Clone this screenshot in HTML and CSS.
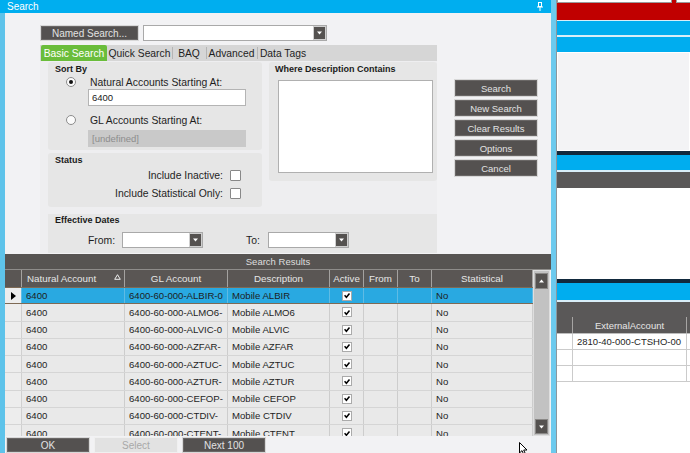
FILE: index.html
```html
<!DOCTYPE html>
<html>
<head>
<meta charset="utf-8">
<title>Search</title>
<link rel="stylesheet" href="styles.css">
</head>
<body>
<div class="screen">
  <div class="window">
    <div class="titlebar">
      <span>Search</span>
      <svg class="pin" viewBox="0 0 6 9" width="6" height="9"><rect x="1.5" y="0.5" width="3" height="4" fill="none" stroke="#fff" stroke-width="1"/><line x1="0" y1="5" x2="6" y2="5" stroke="#fff" stroke-width="1"/><line x1="3" y1="5" x2="3" y2="9" stroke="#fff" stroke-width="1"/></svg>
    </div>
    <div class="wbody">
      <div class="top">
        <div class="form">
          <div class="named-row">
            <div class="btn named">Named Search...</div>
            <div class="combo named-combo"><span class="combo-btn"><svg viewBox="0 0 7 4" width="7" height="4"><path d="M1 0.5h5l-2.5 3z" fill="#fff"/></svg></span></div>
          </div>
          <div class="tabs">
            <span class="tab active t1">Basic Search</span>
            <span class="tab t2">Quick Search</span>
            <span class="tab t3">BAQ</span>
            <span class="tab t4">Advanced</span>
            <span class="tab t5">Data Tags</span>
          </div>
          <div class="panel">
            <div class="left-col">
              <div class="group sortby">
                <div class="glabel">Sort By</div>
                <div class="radio-row"><span class="radio on"></span><span>Natural Accounts Starting At:</span></div>
                <div class="input">6400</div>
                <div class="radio-row second"><span class="radio"></span><span>GL Accounts Starting At:</span></div>
                <div class="input disabled">[undefined]</div>
              </div>
              <div class="group status">
                <div class="glabel">Status</div>
                <div class="check-row"><span>Include Inactive:</span><span class="cb"></span></div>
                <div class="check-row"><span>Include Statistical Only:</span><span class="cb"></span></div>
              </div>
            </div>
            <div class="group where">
              <div class="glabel">Where Description Contains</div>
              <div class="textarea"></div>
            </div>
            <div class="dates">
              <div class="glabel">Effective Dates</div>
              <div class="date-row">
                <span class="dlabel from">From:</span>
                <div class="combo date"><span class="combo-btn"><svg viewBox="0 0 7 4" width="7" height="4"><path d="M1 0.5h5l-2.5 3z" fill="#fff"/></svg></span></div>
                <span class="dlabel to">To:</span>
                <div class="combo date"><span class="combo-btn"><svg viewBox="0 0 7 4" width="7" height="4"><path d="M1 0.5h5l-2.5 3z" fill="#fff"/></svg></span></div>
              </div>
            </div>
          </div>
        </div>
        <div class="actions">
          <div class="btn act">Search</div>
          <div class="btn act">New Search</div>
          <div class="btn act">Clear Results</div>
          <div class="btn act">Options</div>
          <div class="btn act">Cancel</div>
        </div>
      </div>
      <div class="results">
        <div class="results-title">Search Results</div>
        <div class="grid-wrap">
          <div class="grid">
            <div class="row head">
              <div class="c sel"></div>
              <div class="c first-col">Natural Account<svg class="sort" viewBox="0 0 7 6" width="7" height="6"><path d="M3.5 0.7 L6.3 5.3 H0.7 Z" fill="none" stroke="#eee" stroke-width="1"/></svg></div>
              <div class="c">GL Account</div>
              <div class="c">Description</div>
              <div class="c">Active</div>
              <div class="c">From</div>
              <div class="c">To</div>
              <div class="c">Statistical</div>
            </div>
            <div class="rows">
              <div class="row selected"><div class="c sel"><svg viewBox="0 0 5 8" width="5" height="8"><path d="M0 0 L5 4 L0 8 Z" fill="#000"/></svg></div><div class="c">6400</div><div class="c">6400-60-000-ALBIR-0</div><div class="c">Mobile ALBIR</div><div class="c chk"><span class="tick"><svg viewBox="0 0 9 9" width="9" height="9"><path d="M1.8 4.3 L3.8 6.5 L7.3 2.3" fill="none" stroke="#000" stroke-width="1.7"/></svg></span></div><div class="c"></div><div class="c"></div><div class="c">No</div></div>
              <div class="row"><div class="c sel"></div><div class="c">6400</div><div class="c">6400-60-000-ALMO6-</div><div class="c">Mobile ALMO6</div><div class="c chk"><span class="tick"><svg viewBox="0 0 9 9" width="9" height="9"><path d="M1.8 4.3 L3.8 6.5 L7.3 2.3" fill="none" stroke="#000" stroke-width="1.7"/></svg></span></div><div class="c"></div><div class="c"></div><div class="c">No</div></div>
              <div class="row"><div class="c sel"></div><div class="c">6400</div><div class="c">6400-60-000-ALVIC-0</div><div class="c">Mobile ALVIC</div><div class="c chk"><span class="tick"><svg viewBox="0 0 9 9" width="9" height="9"><path d="M1.8 4.3 L3.8 6.5 L7.3 2.3" fill="none" stroke="#000" stroke-width="1.7"/></svg></span></div><div class="c"></div><div class="c"></div><div class="c">No</div></div>
              <div class="row"><div class="c sel"></div><div class="c">6400</div><div class="c">6400-60-000-AZFAR-</div><div class="c">Mobile AZFAR</div><div class="c chk"><span class="tick"><svg viewBox="0 0 9 9" width="9" height="9"><path d="M1.8 4.3 L3.8 6.5 L7.3 2.3" fill="none" stroke="#000" stroke-width="1.7"/></svg></span></div><div class="c"></div><div class="c"></div><div class="c">No</div></div>
              <div class="row"><div class="c sel"></div><div class="c">6400</div><div class="c">6400-60-000-AZTUC-</div><div class="c">Mobile AZTUC</div><div class="c chk"><span class="tick"><svg viewBox="0 0 9 9" width="9" height="9"><path d="M1.8 4.3 L3.8 6.5 L7.3 2.3" fill="none" stroke="#000" stroke-width="1.7"/></svg></span></div><div class="c"></div><div class="c"></div><div class="c">No</div></div>
              <div class="row"><div class="c sel"></div><div class="c">6400</div><div class="c">6400-60-000-AZTUR-</div><div class="c">Mobile AZTUR</div><div class="c chk"><span class="tick"><svg viewBox="0 0 9 9" width="9" height="9"><path d="M1.8 4.3 L3.8 6.5 L7.3 2.3" fill="none" stroke="#000" stroke-width="1.7"/></svg></span></div><div class="c"></div><div class="c"></div><div class="c">No</div></div>
              <div class="row"><div class="c sel"></div><div class="c">6400</div><div class="c">6400-60-000-CEFOP-</div><div class="c">Mobile CEFOP</div><div class="c chk"><span class="tick"><svg viewBox="0 0 9 9" width="9" height="9"><path d="M1.8 4.3 L3.8 6.5 L7.3 2.3" fill="none" stroke="#000" stroke-width="1.7"/></svg></span></div><div class="c"></div><div class="c"></div><div class="c">No</div></div>
              <div class="row"><div class="c sel"></div><div class="c">6400</div><div class="c">6400-60-000-CTDIV-</div><div class="c">Mobile CTDIV</div><div class="c chk"><span class="tick"><svg viewBox="0 0 9 9" width="9" height="9"><path d="M1.8 4.3 L3.8 6.5 L7.3 2.3" fill="none" stroke="#000" stroke-width="1.7"/></svg></span></div><div class="c"></div><div class="c"></div><div class="c">No</div></div>
              <div class="row"><div class="c sel"></div><div class="c">6400</div><div class="c">6400-60-000-CTENT-</div><div class="c">Mobile CTENT</div><div class="c chk"><span class="tick"><svg viewBox="0 0 9 9" width="9" height="9"><path d="M1.8 4.3 L3.8 6.5 L7.3 2.3" fill="none" stroke="#000" stroke-width="1.7"/></svg></span></div><div class="c"></div><div class="c"></div><div class="c">No</div></div>
            </div>
          </div>
          <div class="vscroll">
            <div class="sbtn up"><svg viewBox="0 0 7 4" width="7" height="4"><path d="M1 3.5h5l-2.5-3z" fill="#fff"/></svg></div>
            <div class="strack"></div>
            <div class="sbtn down"><svg viewBox="0 0 7 4" width="7" height="4"><path d="M1 0.5h5l-2.5 3z" fill="#fff"/></svg></div>
          </div>
        </div>
      </div>
      <div class="footer">
        <div class="btn fbtn">OK</div>
        <div class="btn fbtn disabled">Select</div>
        <div class="btn fbtn">Next 100</div>
      </div>
    </div>
  </div>
  <div class="app">
    <div class="a-red"><span class="abox b1"></span><span class="abox b2"></span></div>
    <div class="a-line"></div>
    <div class="a-blue h14"></div>
    <div class="a-line h2"></div>
    <div class="a-blue h15"></div>
    <div class="a-panel"></div>
    <div class="a-navy"></div>
    <div class="a-blue h15"></div>
    <div class="a-line h2"></div>
    <div class="a-dark"></div>
    <div class="a-white h91"></div>
    <div class="a-navy"></div>
    <div class="a-blue h17"></div>
    <div class="a-line h2"></div>
    <div class="a-dark h15"></div>
    <div class="a-table">
      <div class="arow ahead"><span class="ac first"></span><span class="ac ext">ExternalAccount</span><span class="ac last"></span></div>
      <div class="arow"><span class="ac first"></span><span class="ac ext">2810-40-000-CTSHO-00</span><span class="ac last"></span></div>
      <div class="arow"><span class="ac first"></span><span class="ac ext"></span><span class="ac last"></span></div>
      <div class="arow"><span class="ac first"></span><span class="ac ext"></span><span class="ac last"></span></div>
    </div>
  </div>
</div>
<svg class="cursor" viewBox="0 0 10 14" width="10" height="14"><path d="M0.5 0.5 L0.5 11 L3 8.6 L5 13 L6.6 12.3 L4.7 8 L8 8 Z" fill="#fff" stroke="#000" stroke-width="1"/></svg>
</body>
</html>
```

FILE: styles.css
```css
* { box-sizing: border-box; }
html, body { margin: 0; padding: 0; }
body {
  width: 690px;
  height: 453px;
  overflow: hidden;
  position: relative;
  font-family: "Liberation Sans", Arial, sans-serif;
  font-size: 10px;
  color: #1e1e1e;
  background: #fff;
}
.screen { display: flex; height: 453px; }

/* window */
.window {
  width: 556px;
  flex: none;
  display: flex;
  flex-direction: column;
  border-right: 5px solid #6ccaee;
  background: #f2f2f4;
}
.titlebar {
  height: 13px;
  flex: none;
  background: #00aeef;
  color: #fff;
  display: flex;
  align-items: center;
  justify-content: space-between;
  padding: 0 8px 0 7px;
  font-size: 10px;
}
.pin { display: block; }
.wbody {
  flex: 1;
  min-height: 0;
  border-left: 5px solid #5ec3ea;
  display: flex;
  flex-direction: column;
}
.top { height: 241px; flex: none; display: flex; padding: 12px 0 0 35px; }
.form { width: 397px; display: flex; flex-direction: column; }

.btn {
  background: #545150;
  color: #e2e2e2;
  border: 1px solid #d8d8d8;
  outline: 1px solid #6a6766;
  outline-offset: -2px;
  display: flex;
  align-items: center;
  justify-content: center;
  font-size: 10px;
  white-space: nowrap;
}
.named-row { display: flex; gap: 4px; height: 16px; }
.named { width: 99px; height: 16px; }
.combo {
  background: #fff;
  border: 1px solid #a9a9a9;
  display: flex;
  justify-content: flex-end;
  align-items: stretch;
  height: 16px;
}
.named-combo { width: 184px; }
.combo-btn {
  width: 13px;
  background: #555250;
  border: 1px solid #cfcfcf;
  display: flex;
  align-items: center;
  justify-content: center;
}
.combo-btn svg { display: block; }

.tabs {
  margin-top: 4px;
  height: 16px;
  background: #d6d6d6;
  display: flex;
  padding-left: 1px;
}
.tab {
  display: flex;
  align-items: center;
  justify-content: center;
  color: #1e1e1e;
  font-size: 10.3px;
  position: relative;
}
.tab + .tab:not(.t2)::before {
  content: "";
  position: absolute;
  left: 0;
  top: 2px;
  bottom: 2px;
  width: 1px;
  background: #b5b5b5;
}
.tab.active { background: #6abd3b; color: #fff; border-radius: 2px 2px 0 0; }
.t1 { width: 66px; }
.t2 { width: 65px; }
.t3 { width: 34px; }
.t4 { width: 51px; }
.t5 { width: 52px; }

.panel {
  height: 192px;
  background: #eeeef0;
  display: grid;
  grid-template-columns: 214px 168px;
  grid-template-rows: 145px 39px;
  column-gap: 7px;
  row-gap: 7px;
  padding: 1px 0 0 8px;
}
.left-col { display: flex; flex-direction: column; gap: 3px; }
.group { background: #e6e6e6; border-radius: 3px; padding: 2px 0 0 7px; }
.glabel { font-weight: bold; font-size: 9px; line-height: 11px; height: 11px; color: #1a1a1a; }
.sortby { height: 88px; }
.radio-row { display: flex; align-items: center; height: 14px; margin-top: 0; padding-left: 11px; gap: 14px; font-size: 10.4px; }
.radio-row.second { margin-top: 7px; }
.radio {
  width: 10px;
  height: 10px;
  border-radius: 50%;
  border: 1px solid #8c8c8c;
  background: #fbfbfb;
  display: flex;
  align-items: center;
  justify-content: center;
}
.radio.on::after { content: ""; width: 4px; height: 4px; border-radius: 50%; background: #111; }
.input {
  margin-left: 33px;
  width: 158px;
  height: 17px;
  background: #fff;
  border: 1px solid #b4b4b4;
  display: flex;
  align-items: center;
  padding-left: 3px;
  font-size: 9.5px;
  color: #1a1a1a;
}
.sortby .input:last-child { margin-top: 3px; }
.input.disabled { background: #c9c9c9; border-color: #c9c9c9; color: #8d8d8d; }

.status { height: 54px; }
.check-row {
  height: 18px;
  display: flex;
  align-items: center;
  justify-content: flex-end;
  gap: 7px;
  padding-right: 21px;
  font-size: 10.4px;
}
.cb { width: 11px; height: 11px; background: #fff; border: 1px solid #888; border-radius: 1px; }

.where { height: 119px; padding-top: 2px; padding-left: 6px; }
.textarea { margin: 5px 0 0 3px; width: 155px; height: 93px; background: #fff; border: 1px solid #b0b0b0; }

.dates {
  grid-column: 1 / span 2;
  background: #e6e6e6;
  padding: 1px 0 0 7px;
}
.date-row { display: flex; align-items: center; margin-top: 6px; height: 16px; }
.dlabel { font-size: 10.4px; }
.dlabel.from { margin-left: 33px; width: 34px; }
.dlabel.to { margin-left: 43px; width: 22px; }
.combo.date { width: 81px; }

.actions {
  margin-left: 17px;
  padding-top: 54px;
  width: 84px;
  display: flex;
  flex-direction: column;
  gap: 2px;
}
.act { height: 18px; font-size: 9.5px; }

/* results */
.results { flex: none; display: flex; flex-direction: column; }
.results-title {
  height: 16px;
  background: #575452;
  color: #dedede;
  font-size: 9.5px;
  display: flex;
  align-items: center;
  justify-content: center;
  border-bottom: 1px solid #8e8c8a;
}
.grid-wrap { display: flex; height: 166px; background: #f2f2f4; }
.grid { width: 528px; display: flex; flex-direction: column; }
.row {
  display: grid;
  grid-template-columns: 17px 103px 103px 102px 34px 34px 34px 101px;
}
.row.head { height: 17px; background: #5a5654; color: #e6e6e6; font-size: 9.8px; }
.row.head .c {
  display: flex;
  align-items: center;
  justify-content: center;
  border-right: 1px solid #a4a2a0;
  position: relative;
}
.row.head .c.first-col { justify-content: flex-start; padding-left: 5px; }
.sort { position: absolute; right: 3px; top: 4px; }
.rows { height: 149px; overflow: hidden; }
.rows .row {
  height: 17.25px;
  background: #e9e9e9;
  border-bottom: 1px solid #d5d5d5;
  font-size: 9.6px;
  color: #1e1e1e;
}
.rows .c {
  border-right: 1px solid #cdcdcd;
  padding-left: 4px;
  display: flex;
  align-items: center;
  white-space: nowrap;
  overflow: hidden;
}
.rows .c.sel { background: #ededed; padding-left: 6px; border-right: 1px solid #d0d0d0; }
.rows .c.chk { justify-content: center; padding-left: 0; }
.tick { width: 10px; height: 10px; background: #fff; border: 1px solid #aaa; display: flex; align-items: center; justify-content: center; }
.tick svg { display: block; }
.rows .row.selected { background: #29a9e1; border: 1px solid #7e6a55; border-left: 0; }
.rows .row.selected .c { border-right-color: #5fbbe4; }
.rows .row.selected .c.sel { background: #ededed; }

.vscroll {
  width: 17px;
  display: flex;
  flex-direction: column;
  padding: 2px 1px 1px 1px;
  background: #c2c2c2;
  border: 1px solid #dedede;
}
.sbtn { height: 15px; background: #555250; display: flex; align-items: center; justify-content: center; flex: none; border: 1px solid #8a8886; }
.sbtn.up { height: 16px; }
.strack { flex: 1; }

.footer { flex: 1; display: flex; gap: 4px; padding: 1px 0 0 1px; }
.fbtn { width: 84px; height: 16px; font-size: 10px; }
.fbtn.disabled { background: #e2e2e2; color: #a8a8a8; outline-color: #e2e2e2; border-color: #f0f0f0; }

/* background application */
.app { flex: 1; border-left: 1px solid #8b979d; display: flex; flex-direction: column; background: #fff; }
.a-red { height: 20px; background: #c00000; display: flex; gap: 4px; align-items: flex-start; }
.abox { height: 3px; background: #fff; border: 1px solid #9a9a9a; border-top: 0; }
.b1 { width: 115px; }
.b2 { flex: 1; border-right: 0; }
.a-line { height: 1px; background: #d9eef8; }
.a-line.h2 { height: 2px; }
.a-blue { background: #00adef; }
.h14 { height: 14px; }
.h15 { height: 15px; }
.h17 { height: 17px; }
.a-panel { height: 99px; background: #f3f3f5; border: 1px solid #ffffff; }
.a-navy { height: 4px; background: #11293d; }
.a-dark { height: 16px; background: #5a5858; }
.a-dark.h15 { height: 15px; }
.a-white { background: #fff; }
.h91 { height: 91px; }
.a-table { display: flex; flex-direction: column; }
.arow { display: flex; height: 16px; border-bottom: 1px solid #cbcbcb; font-size: 9.5px; }
.ac { border-right: 1px solid #cbcbcb; display: flex; align-items: center; }
.ac.first { width: 16px; }
.ac.ext { width: 114px; padding-left: 4px; white-space: nowrap; overflow: hidden; }
.ac.last { flex: 1; border-right: 0; }
.ahead { height: 17px; background: #5a5858; color: #e6e6e6; border-bottom: 1px solid #bdbdbd; }
.ahead .ac { border-right-color: #a6a4a3; }
.ahead .ac.ext { justify-content: center; padding-left: 0; }

.cursor { position: absolute; left: 519px; top: 442px; }
```
